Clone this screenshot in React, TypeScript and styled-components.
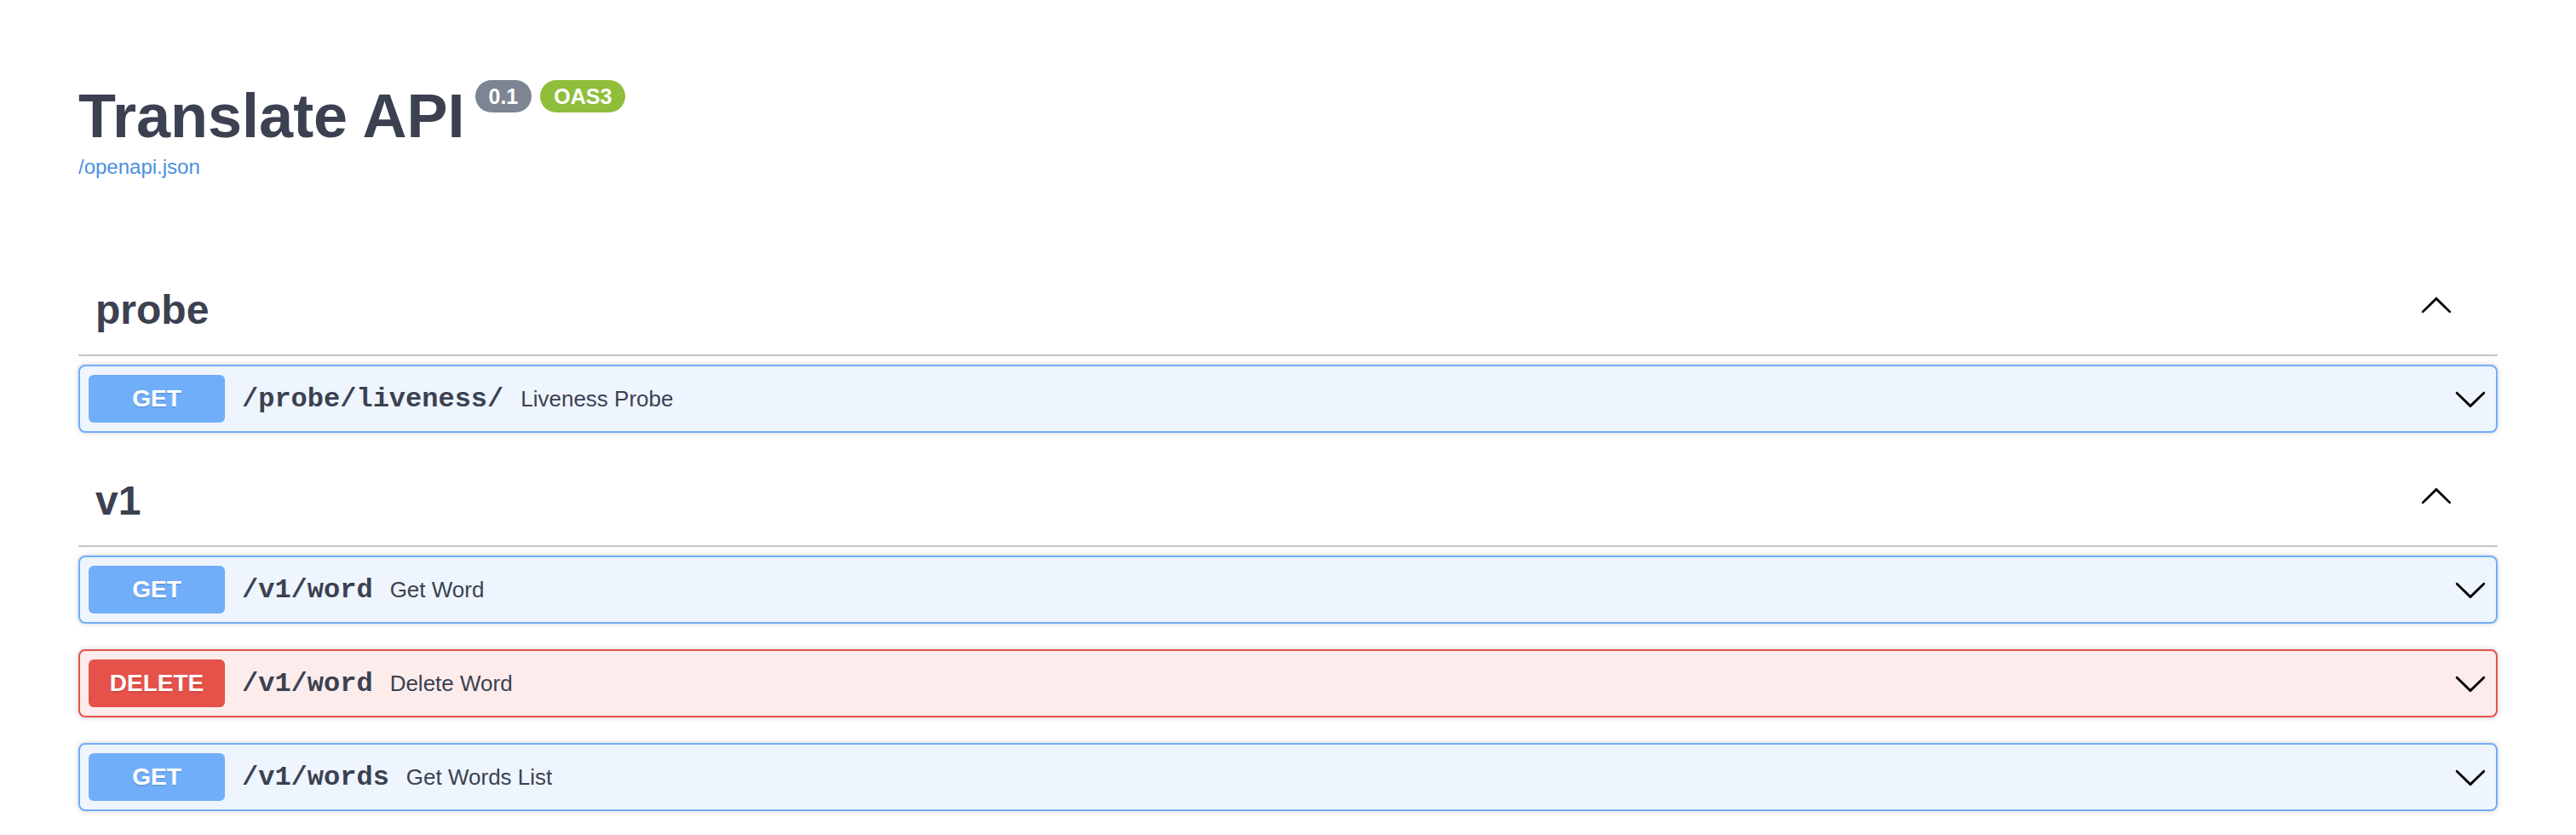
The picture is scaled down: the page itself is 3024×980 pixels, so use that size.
import React from "react";
import styled, { createGlobalStyle } from "styled-components";

const GlobalStyle = createGlobalStyle`
  html, body {
    margin: 0;
    padding: 0;
    background: #ffffff;
  }
  body {
    font-family: "Liberation Sans", Arial, sans-serif;
    color: #3b4151;
  }
`;

const Wrapper = styled.div`
  box-sizing: border-box;
  max-width: 2920px;
  margin: 0 auto;
  padding: 94px 40px 0;
`;

const Info = styled.section`
  display: flex;
  flex-direction: column;
  align-items: flex-start;
  margin-bottom: 104px;
`;

const TitleRow = styled.h2`
  display: flex;
  align-items: flex-start;
  margin: 0;
  font-size: 72px;
  line-height: 84px;
  font-weight: 700;
  color: #3b4151;
`;

const Badge = styled.span<{ $bg: string }>`
  display: inline-block;
  margin-left: 10px;
  padding: 0 16px;
  height: 38px;
  line-height: 38px;
  border-radius: 114px;
  background: ${(p) => p.$bg};
  color: #ffffff;
  font-size: 25px;
  font-weight: 700;
  &:first-of-type {
    margin-left: 12px;
  }
`;

const SpecLink = styled.a`
  margin-top: 4px;
  font-size: 24px;
  line-height: 28px;
  color: #4990e2;
  text-decoration: none;
`;

const TagSection = styled.section`
  display: flex;
  flex-direction: column;
`;

const TagHeader = styled.h3`
  display: flex;
  align-items: center;
  margin: 0 0 10px;
  padding: 18px 40px 20px 20px;
  border-bottom: 2px solid rgba(59, 65, 81, 0.3);
  font-size: 48px;
  line-height: 64px;
  font-weight: 700;
  color: #3b4151;
`;

const TagName = styled.span`
  flex: 1 1 auto;
`;

const ExpandButton = styled.span`
  display: flex;
  padding: 0 12px 14px;
`;

const Operations = styled.div`
  display: flex;
  flex-direction: column;
`;

type Method = "get" | "delete";

const methodColors: Record<Method, { main: string; bg: string }> = {
  get: { main: "#71aef9", bg: "#eef5fe" },
  delete: { main: "#e6514a", bg: "#fcecec" },
};

const OpBlock = styled.div<{ $method: Method }>`
  margin: 0 0 30px;
  border: 2px solid ${(p) => methodColors[p.$method].main};
  border-radius: 8px;
  background: ${(p) => methodColors[p.$method].bg};
  box-shadow: 0 0 6px rgba(0, 0, 0, 0.19);
`;

const OpSummary = styled.div`
  display: flex;
  align-items: center;
  padding: 10px;
`;

const MethodBadge = styled.span<{ $method: Method }>`
  min-width: 160px;
  padding: 12px 0;
  border-radius: 6px;
  background: ${(p) => methodColors[p.$method].main};
  color: #ffffff;
  font-family: "Liberation Sans", Arial, sans-serif;
  font-size: 28px;
  line-height: 32px;
  font-weight: 700;
  text-align: center;
  text-shadow: 0 2px 0 rgba(0, 0, 0, 0.1);
`;

const OpPath = styled.span`
  display: flex;
  align-items: center;
  padding: 0 20px;
  font-family: "Liberation Mono", "Courier New", monospace;
  font-size: 32px;
  font-weight: 700;
  color: #3b4151;
`;

const OpDescription = styled.span`
  flex: 1 1 auto;
  font-size: 26px;
  color: #3b4151;
`;

const Arrow = styled.svg`
  width: 40px;
  height: 40px;
  flex: 0 0 auto;
  fill: #000000;
`;

const ArrowUp = () => (
  <Arrow viewBox="0 0 20 20" aria-hidden="true">
    <path d="M 17.418 14.908 C 17.69 15.176 18.127 15.176 18.397 14.908 C 18.667 14.64 18.668 14.207 18.397 13.939 L 10.489 6.109 C 10.219 5.841 9.782 5.841 9.51 6.109 L 1.602 13.939 C 1.332 14.207 1.332 14.64 1.602 14.908 C 1.873 15.176 2.311 15.176 2.581 14.908 L 10 7.767 L 17.418 14.908 Z" />
  </Arrow>
);

const ArrowDown = () => (
  <Arrow viewBox="0 0 20 20" aria-hidden="true">
    <path d="M17.418 6.109c.272-.268.709-.268.979 0s.271.701 0 .969l-7.908 7.83c-.27.268-.707.268-.979 0l-7.908-7.83c-.27-.268-.27-.701 0-.969.271-.268.709-.268.979 0L10 13.25l7.418-7.141z" />
  </Arrow>
);

type Op = { method: Method; path: string; summary: string };
type Tag = { name: string; ops: Op[] };

const tags: Tag[] = [
  {
    name: "probe",
    ops: [{ method: "get", path: "/probe/liveness/", summary: "Liveness Probe" }],
  },
  {
    name: "v1",
    ops: [
      { method: "get", path: "/v1/word", summary: "Get Word" },
      { method: "delete", path: "/v1/word", summary: "Delete Word" },
      { method: "get", path: "/v1/words", summary: "Get Words List" },
    ],
  },
];

export default function App() {
  return (
    <>
      <GlobalStyle />
      <Wrapper>
        <Info>
          <TitleRow>
            Translate API
            <Badge $bg="#7d8492">0.1</Badge>
            <Badge $bg="#8fbe3b">OAS3</Badge>
          </TitleRow>
          <SpecLink href="#">/openapi.json</SpecLink>
        </Info>
        {tags.map((tag) => (
          <TagSection key={tag.name}>
            <TagHeader>
              <TagName>{tag.name}</TagName>
              <ExpandButton>
                <ArrowUp />
              </ExpandButton>
            </TagHeader>
            <Operations>
              {tag.ops.map((op, i) => (
                <OpBlock key={i} $method={op.method}>
                  <OpSummary>
                    <MethodBadge $method={op.method}>{op.method.toUpperCase()}</MethodBadge>
                    <OpPath>{op.path}</OpPath>
                    <OpDescription>{op.summary}</OpDescription>
                    <ArrowDown />
                  </OpSummary>
                </OpBlock>
              ))}
            </Operations>
          </TagSection>
        ))}
      </Wrapper>
    </>
  );
}
